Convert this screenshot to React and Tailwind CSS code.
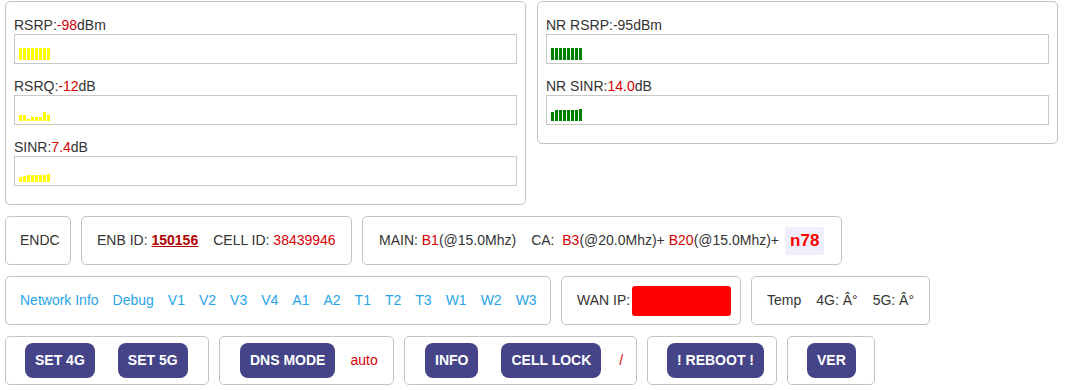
const font = { fontFamily: '"Liberation Sans", Arial, sans-serif' };

function Bars({ heights, color }) {
  return (
    <div className="h-[30px] w-full border border-[#c8c8c8] flex items-end gap-[1px] pl-[4px] pb-[3px]">
      {heights.map((h, i) => (
        <div key={i} className={`w-[3px] ${color}`} style={{ height: h }} />
      ))}
    </div>
  );
}

function Meter({ name, value, unit, red = true, heights, color }) {
  return (
    <div className="flex flex-col">
      <div className="text-[14px] leading-[17px] text-[#333]">
        {name}:<span className={red ? "text-[#d40000]" : ""}>{value}</span>
        {unit}
      </div>
      <Bars heights={heights} color={color} />
    </div>
  );
}

function Box({ children, className = "" }) {
  return (
    <div
      className={`h-[49px] shrink-0 whitespace-nowrap border border-[#c4c4c4] rounded-[5px] flex items-center text-[14px] text-[#333] ${className}`}
    >
      {children}
    </div>
  );
}

function Btn({ children }) {
  return (
    <button className="h-[35px] shrink-0 whitespace-nowrap px-[10px] rounded-[8px] bg-[#454489] text-white font-bold text-[14px]">
      {children}
    </button>
  );
}

const links = ["Network Info", "Debug", "V1", "V2", "V3", "V4", "A1", "A2", "T1", "T2", "T3", "W1", "W2", "W3"];

export default function App() {
  return (
    <div className="w-[1070px] h-[390px] bg-white pt-[1px] px-[5px] flex flex-col gap-[11px]" style={font}>
      <div className="flex items-start gap-[11px]">
        <div className="w-[521px] border border-[#c4c4c4] rounded-[5px] px-[8px] pt-[15px] pb-[18px] flex flex-col gap-[14px]">
          <Meter name="RSRP" value="-98" unit="dBm" heights={[12, 12, 12, 12, 12, 12, 12, 12]} color="bg-[#ffff00]" />
          <Meter name="RSRQ" value="-12" unit="dB" heights={[6, 6, 2, 4, 4, 4, 9, 6]} color="bg-[#ffff00]" />
          <Meter name="SINR" value="7.4" unit="dB" heights={[5, 6, 7, 7, 7, 7, 7, 8]} color="bg-[#ffff00]" />
        </div>
        <div className="w-[521px] border border-[#c4c4c4] rounded-[5px] px-[8px] pt-[15px] pb-[18px] flex flex-col gap-[14px]">
          <Meter name="NR RSRP" value="-95" unit="dBm" red={false} heights={[12, 12, 12, 12, 12, 12, 12, 12]} color="bg-[#008000]" />
          <Meter name="NR SINR" value="14.0" unit="dB" heights={[9, 11, 11, 11, 11, 11, 11, 12]} color="bg-[#008000]" />
        </div>
      </div>

      <div className="flex gap-[10px]">
        <Box className="px-[14px] w-[66px]">ENDC</Box>
        <Box className="w-[271px] px-[15px]">
          <span>ENB ID:&nbsp;</span>
          <span className="font-bold underline text-[#b30000]">150156</span>
          <span className="ml-[15px]">CELL ID:&nbsp;</span>
          <span className="text-[#d40000]">38439946</span>
        </Box>
        <Box className="w-[480px] pl-[16px]">
          <span>MAIN:&nbsp;</span>
          <span className="text-[#d40000]">B1</span>
          <span>(@15.0Mhz)</span>
          <span className="ml-[15px]">CA:&nbsp;&nbsp;</span>
          <span className="text-[#d40000]">B3</span>
          <span>(@20.0Mhz)+&nbsp;</span>
          <span className="text-[#d40000]">B20</span>
          <span>(@15.0Mhz)+</span>
          <span className="ml-[6px] h-[28px] px-[5px] rounded-[3px] bg-[#eeeefc] text-[#ff0000] font-bold text-[17px] flex items-center">
            n78
          </span>
        </Box>
      </div>

      <div className="flex gap-[10px]">
        <Box className="w-[546px] pl-[14px]">
          <div className="flex gap-[14px] text-[#2aa4e8]">
            {links.map((l) => (
              <span key={l}>{l}</span>
            ))}
          </div>
        </Box>
        <Box className="w-[180px] pl-[15px]">
          <span>WAN IP:</span>
          <span className="ml-[2px] w-[99px] h-[30px] bg-[#ff0000] rounded-[3px]" />
        </Box>
        <Box className="w-[179px] pl-[15px] gap-[15px]">
          <span>Temp</span>
          <span>4G: Â°</span>
          <span>5G: Â°</span>
        </Box>
      </div>

      <div className="flex gap-[10px]">
        <Box className="w-[204px] pl-[19px] gap-[23px]">
          <Btn>SET 4G</Btn>
          <Btn>SET 5G</Btn>
        </Box>
        <Box className="w-[175px] pl-[20px] gap-[15px]">
          <Btn>DNS MODE</Btn>
          <span className="text-[#d40000]">auto</span>
        </Box>
        <Box className="w-[233px] pl-[20px]">
          <Btn>INFO</Btn>
          <span className="ml-[23px] flex">
            <Btn>CELL LOCK</Btn>
          </span>
          <span className="ml-[18px] text-[#d40000]">/</span>
        </Box>
        <Box className="w-[130px] pl-[19px]">
          <Btn>! REBOOT !</Btn>
        </Box>
        <Box className="w-[88px] pl-[19px]">
          <Btn>VER</Btn>
        </Box>
      </div>
    </div>
  );
}
